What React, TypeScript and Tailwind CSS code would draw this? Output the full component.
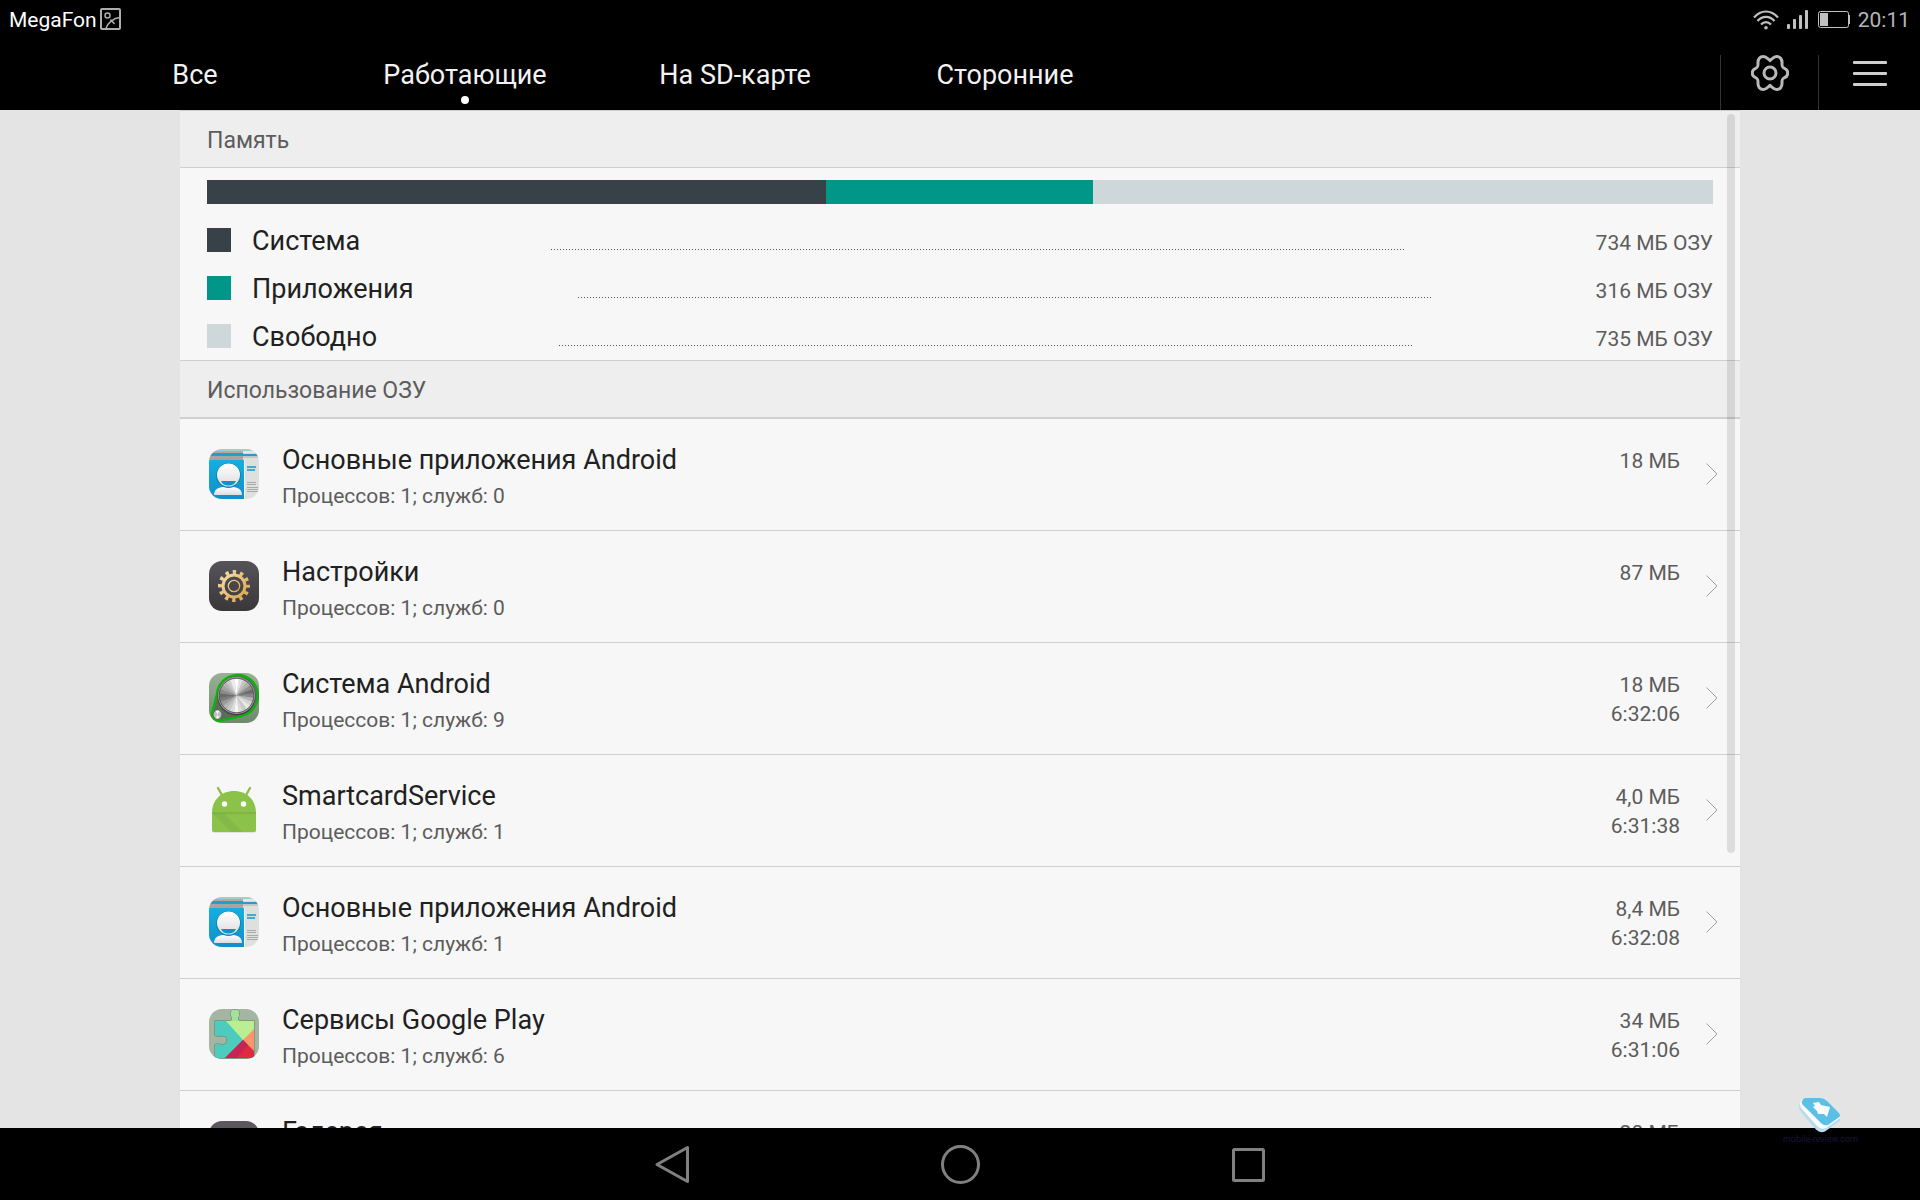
import type { ReactNode } from "react";

const tabs = ["Все", "Работающие", "На SD-карте", "Сторонние"];

const memory = [
  { label: "Система", mb: 734, color: "bg-[#374248]" },
  { label: "Приложения", mb: 316, color: "bg-[#009688]" },
  { label: "Свободно", mb: 735, color: "bg-[#ced7da]" },
];

function ContactsIcon() {
  return (
    <svg viewBox="0 0 50 50" className="size-[50px] rounded-[13px]" aria-hidden="true">
      <defs>
        <linearGradient id="contacts-blue" x1="0" y1="0" x2="0" y2="1">
          <stop offset="0" stopColor="#16aee0" />
          <stop offset="1" stopColor="#0f8fc6" />
        </linearGradient>
        <linearGradient id="contacts-face" x1="0" y1="0" x2="0" y2="1">
          <stop offset="0" stopColor="#ffffff" />
          <stop offset="1" stopColor="#dcdcdc" />
        </linearGradient>
      </defs>
      <rect width="50" height="50" fill="#dee0de" />
      <rect width="50" height="2" fill="#9fcfc8" />
      <rect y="2" width="34" height="2" fill="#b5aaa2" />
      <rect x="34" y="2" width="16" height="2" fill="#e4e6e4" />
      <rect y="4" width="50" height="3" fill="#1d9fd0" />
      <rect x="34" y="4" width="16" height="1" fill="#cfe0e6" />
      <rect y="7" width="34" height="4" fill="#a8a5a1" />
      <rect x="34" y="7" width="16" height="2" fill="#c4c6c6" />
      <rect y="11" width="35" height="39" fill="url(#contacts-blue)" />
      <rect x="35" y="11" width="1" height="39" fill="#f5f5f5" />
      <rect x="38" y="17" width="9" height="2" fill="#4aa8cc" />
      <rect x="38" y="20" width="8" height="2" fill="#4aa8cc" />
      <path d="M38 33.500h9M38 35.500h9M38 38.500h11M38 40.500h11M38 42.500h11" stroke="#a8aaaa" />
      <path d="M5 46c0-6 5-8 10-8h8c5 0 10 2 10 8z" fill="url(#contacts-face)" />
      <circle cx="19.500" cy="26.500" r="12.500" fill="#0d86b8" />
      <circle cx="19.500" cy="26" r="11.500" fill="url(#contacts-face)" />
      <path d="M12 32h15c-1 3-4 4.500-7.500 4.500S13 35 12 32z" fill="#1093c8" />
    </svg>
  );
}

function SettingsIcon() {
  return (
    <svg viewBox="0 0 50 50" className="size-[50px] rounded-[13px]" fill="none" aria-hidden="true">
      <defs>
        <linearGradient id="settings-bg" x1="0" y1="0" x2="0" y2="1">
          <stop offset="0" stopColor="#565458" />
          <stop offset="1" stopColor="#39373a" />
        </linearGradient>
        <linearGradient id="settings-gold" x1="0" y1="0" x2="1" y2="1">
          <stop offset="0" stopColor="#f3dba6" />
          <stop offset="1" stopColor="#dba74c" />
        </linearGradient>
      </defs>
      <rect width="50" height="50" fill="url(#settings-bg)" />
      <circle
        cx="25"
        cy="25"
        r="14"
        stroke="url(#settings-gold)"
        strokeWidth="4"
        strokeDasharray="3.330 4"
        strokeDashoffset="1.660"
      />
      <circle cx="25" cy="25" r="11" stroke="url(#settings-gold)" strokeWidth="3" />
      <circle cx="25" cy="25" r="5.700" stroke="url(#settings-gold)" strokeWidth="1.200" />
    </svg>
  );
}

// Brushed metal: one shade per slice, clockwise from the top.
const metal = [
  "#ffffff", "#e2e2e2", "#c4c4c4", "#b0b0b0", "#8e8e8e", "#6c6c6c", "#888888", "#b4b4b4",
  "#d4d4d4", "#e8e8e8", "#c8c8c8", "#d8d8d8", "#f6f6f6", "#dcdcdc", "#c6c6c6", "#b4b4b4",
  "#9a9a9a", "#7c7c7c", "#6a6a6a", "#8a8a8a", "#a2a2a2", "#b6b6b6", "#cccccc", "#ececec",
];

function slice(cx: number, cy: number, r: number, i: number) {
  const step = (Math.PI * 2) / metal.length;
  const a = (i - 0.5) * step;
  const b = (i + 0.6) * step;
  return `M${cx} ${cy}L${cx + r * Math.sin(a)} ${cy - r * Math.cos(a)}L${cx + r * Math.sin(b)} ${cy - r * Math.cos(b)}Z`;
}

function KnobIcon() {
  return (
    <svg viewBox="0 0 50 50" className="size-[50px] rounded-[13px]" fill="none" aria-hidden="true">
      <defs>
        <linearGradient id="knob-bg" x1="0" y1="0" x2="0" y2="1">
          <stop offset="0" stopColor="#9bb096" />
          <stop offset="1" stopColor="#6d8a6a" />
        </linearGradient>
      </defs>
      <rect width="50" height="50" fill="url(#knob-bg)" />
      <path
        d="M8 22A20.500 20.500 0 1 1 35 42C30 44.500 18 46 11 47.500A6.500 6.500 0 0 1 3 40C5 34 6 28 8 22z"
        fill="#5c6b5b"
        stroke="#10b010"
        strokeWidth="2.400"
      />
      <circle cx="27.500" cy="23.500" r="19" fill="#3f433f" />
      <circle cx="27.500" cy="22.500" r="18.500" fill="#a8a8a8" />
      {metal.map((shade, i) => (
        <path key={i} d={slice(27.5, 22.5, 17.3, i)} fill={shade} />
      ))}
      <circle cx="27.500" cy="22.500" r="17.300" stroke="#555555" strokeWidth="1" />
      <circle cx="8.500" cy="41.500" r="4.500" fill="#bdbdbd" stroke="#5a5a5a" />
      <path d="M8.500 41.500L6.500 37.500h4zM8.500 41.500L6.500 45.500h4z" fill="#f5f5f5" />
    </svg>
  );
}

function AndroidIcon() {
  return (
    <svg viewBox="0 2 50 50" className="size-[50px]" fill="none" aria-hidden="true">
      <path d="M3 45v2.500a2 2 0 0 0 2 2h40a2 2 0 0 0 2-2V45z" fill="#c9cfc2" />
      <path d="M9 5l4.500 8M41 5l-4.500 8" stroke="#8bc34a" strokeWidth="2.400" strokeLinecap="round" />
      <path d="M3 30C3 17 12 8 25 8s22 9 22 22z" fill="#8bc34a" />
      <path d="M3 30h44v17a2 2 0 0 1-2 2H5a2 2 0 0 1-2-2z" fill="#8bc34a" />
      <path d="M3 30l19 19h12L15 30z" fill="#84b948" />
      <path d="M3 30h44" stroke="#76a83e" />
      <circle cx="15.500" cy="21" r="2.700" fill="#ffffff" />
      <circle cx="34.500" cy="21" r="2.700" fill="#ffffff" />
    </svg>
  );
}

function PlayServicesIcon() {
  return (
    <svg viewBox="0 0 50 50" className="size-[50px] rounded-[13px]" aria-hidden="true">
      <defs>
        <clipPath id="puzzle">
          <path d="M6 12h16c2-1 1-3 .500-5C21 3 22 1 26 1s5 2 3.500 6c-.500 2-1.500 4 .500 5h15v37H6V36c2-2 3-1 6-.500 4 1 6-1 6-4.500s-2-5-6-4c-3 .500-4 1-6-1z" />
        </clipPath>
      </defs>
      <rect width="50" height="50" fill="#a4b5a1" />
      <path
        d="M6 12h16c2-1 1-3 .500-5C21 3 22 1 26 1s5 2 3.500 6c-.500 2-1.500 4 .500 5h15v37H6V36c2-2 3-1 6-.500 4 1 6-1 6-4.500s-2-5-6-4c-3 .500-4 1-6-1z"
        fill="none"
        stroke="#7d8c7a"
        strokeWidth="1.500"
      />
      <g clipPath="url(#puzzle)">
        <rect width="50" height="50" fill="#4dccbd" />
        <path d="M6 0h44v19L34 31 17 12z" fill="#b9ee93" />
        <path d="M21 0h11v12H21z" fill="#a0e29a" />
        <path d="M46 19v24L34 31z" fill="#f9976a" />
        <path d="M34 31L15 50h31V43z" fill="#e02a40" />
        <path d="M34 31L15 50h12l12-14z" fill="#c62554" />
      </g>
    </svg>
  );
}

function GalleryIcon() {
  return (
    <svg viewBox="0 0 50 50" className="size-[50px] rounded-[13px]" aria-hidden="true">
      <rect width="50" height="50" fill="#5a585c" />
      <rect x="10" y="14" width="30" height="22" rx="3" fill="#e6e6e6" />
    </svg>
  );
}

type App = { name: string; info: string; size: string; time?: string; icon: ReactNode };

const apps: App[] = [
  { name: "Основные приложения Android", info: "Процессов: 1; служб: 0", size: "18 МБ", icon: <ContactsIcon /> },
  { name: "Настройки", info: "Процессов: 1; служб: 0", size: "87 МБ", icon: <SettingsIcon /> },
  { name: "Система Android", info: "Процессов: 1; служб: 9", size: "18 МБ", time: "6:32:06", icon: <KnobIcon /> },
  { name: "SmartcardService", info: "Процессов: 1; служб: 1", size: "4,0 МБ", time: "6:31:38", icon: <AndroidIcon /> },
  { name: "Основные приложения Android", info: "Процессов: 1; служб: 1", size: "8,4 МБ", time: "6:32:08", icon: <ContactsIcon /> },
  { name: "Сервисы Google Play", info: "Процессов: 1; служб: 6", size: "34 МБ", time: "6:31:06", icon: <PlayServicesIcon /> },
  { name: "Галерея", info: "Процессов: 1; служб: 0", size: "20 МБ", icon: <GalleryIcon /> },
];

function StatusBar() {
  return (
    <div className="flex h-10 items-center justify-between pr-[10px] pl-[9px] text-[21px] leading-6">
      <div className="flex items-center gap-[3px] text-white">
        <span>MegaFon</span>
        <svg viewBox="0 0 21 23" className="mb-0.5 h-[23px] w-[21px]" fill="none" stroke="#adadad" strokeWidth="2" aria-hidden="true">
          <rect x="1" y="1" width="19" height="20" rx="1" />
          <circle cx="7.500" cy="7.500" r="2.500" strokeWidth="1.500" />
          <path d="M6 20C8 15 13 10 20 9.500M10.500 11.500l4 4.500" strokeWidth="1.500" />
        </svg>
      </div>
      <div className="flex items-center gap-2 text-[#b5b5b5]">
        <svg viewBox="0 0 26 20" className="h-5 w-[26px]" fill="none" stroke="#c0c0c0" strokeWidth="2.200" aria-hidden="true">
          <path d="M1 7.500C8-.500 18-.500 25 7.500M4.500 11c5-5.500 12-5.500 17 0M8 14.500c3-3.300 7-3.300 10 0" />
          <circle cx="13" cy="17.700" r="1.800" fill="#c0c0c0" stroke="none" />
        </svg>
        <svg viewBox="0 0 21 20" className="h-5 w-[21px]" fill="#c0c0c0" aria-hidden="true">
          <rect y="14" width="3" height="5" rx="1" />
          <rect x="6" y="9" width="3" height="10" rx="1" />
          <rect x="12" y="5" width="3" height="14" rx="1" />
          <rect x="18" width="3" height="19" rx="1" />
        </svg>
        <svg viewBox="0 0 32 18" className="ml-0.5 h-[18px] w-8" fill="none" aria-hidden="true">
          <rect x=".500" y=".500" width="30" height="16" rx="2" stroke="#c0c0c0" />
          <rect x="2" y="2" width="8" height="13" fill="#c0c0c0" />
          <rect x="31" y="4" width="1" height="9" fill="#c0c0c0" />
        </svg>
        <span>20:11</span>
      </div>
    </div>
  );
}

function Header() {
  return (
    <header className="shrink-0 bg-black">
      <StatusBar />
      <div className="flex h-[70px] items-end justify-between pl-[60px]">
        <nav className="flex h-full">
          {tabs.map((tab) => (
            <button
              key={tab}
              type="button"
              aria-current={tab === "Работающие" ? "page" : undefined}
              className="flex w-[270px] flex-col items-center pt-[17px] text-[27px] leading-9 text-[#f2f2f2]"
            >
              {tab}
              {tab === "Работающие" && <span className="mt-[3px] size-2 rounded-full bg-white" />}
            </button>
          ))}
        </nav>
        <div className="flex h-[55px]">
          <button type="button" aria-label="Настройки" className="flex w-[98px] justify-center border-l border-[#333]">
            <svg viewBox="0 0 38 36" className="h-9 w-[38px]" fill="none" stroke="#b9b9b9" strokeWidth="3">
              <path d="M19 5.500C21.500 3.500 23 1.500 25.500 1.500 29 1.500 31.300 4 31 8.500 30.900 12 31.500 12.500 33.500 13.300 37.800 15 37.800 21 33.500 22.700 31.500 23.500 30.900 24 31 27.500 31.300 32 29 34.500 25.500 34.500 23 34.500 21.500 32.500 19 30.500 16.500 32.500 15 34.500 12.500 34.500 9 34.500 6.700 32 7 27.500 7.100 24 6.500 23.500 4.500 22.700 .200 21 .200 15 4.500 13.300 6.500 12.500 7.100 12 7 8.500 6.700 4 9 1.500 12.500 1.500 15 1.500 16.500 3.500 19 5.500z" />
              <circle cx="19" cy="18" r="6" />
            </svg>
          </button>
          <button type="button" aria-label="Меню" className="flex w-[102px] justify-center border-l border-[#333] pt-[5px]">
            <svg viewBox="0 0 34 28" className="h-7 w-[34px]" fill="#cfcfcf">
              <rect y="1" width="34" height="3" rx="1" />
              <rect y="12" width="34" height="3" rx="1" />
              <rect y="23" width="34" height="3" rx="1" />
            </svg>
          </button>
        </div>
      </div>
    </header>
  );
}

function SectionTitle({ children }: { children: ReactNode }) {
  return (
    <h2 className="border-y border-[#cfcfcf] bg-[#eee] px-[27px] pt-1 text-[23px] leading-[52px] text-[#5c5c5c]">{children}</h2>
  );
}

function Memory() {
  return (
    <section>
      <SectionTitle>Память</SectionTitle>
      <div className="px-[27px] pt-3">
        <div className="flex h-6">
          {memory.map((m) => (
            <div key={m.label} className={m.color} style={{ flexGrow: m.mb }} />
          ))}
        </div>
        <ul className="pt-3">
          {memory.map((m) => (
            <li key={m.label} className="flex h-12 items-center">
              <span className={`mr-[21px] size-6 ${m.color}`} />
              <span className="pt-0.5 text-[27px] leading-9 text-[#212121]">{m.label}</span>
              <span className="flex flex-1 justify-center pt-[19px]">
                <span className="h-px w-[854px] bg-[repeating-linear-gradient(90deg,#555_0_1px,transparent_1px_3px)]" />
              </span>
              <span className="pt-1.5 text-[21px] leading-8 text-[#5c5c5c]">{m.mb} МБ ОЗУ</span>
            </li>
          ))}
        </ul>
      </div>
    </section>
  );
}

function AppRow({ app }: { app: App }) {
  return (
    <li>
      <button type="button" className="flex h-28 w-full items-start border-t border-[#cfcfcf] pr-[22px] pl-[29px] text-left">
        <span className="pt-[30px]">{app.icon}</span>
        <span className="flex flex-1 flex-col pt-[23px] pl-[23px]">
          <span className="text-[27px] leading-9 text-[#212121]">{app.name}</span>
          <span className="text-[21px] leading-9 text-[#5c5c5c]">{app.info}</span>
        </span>
        <span className="flex flex-col pt-7 text-right text-[21px] leading-[29px] text-[#5c5c5c]">
          <span>{app.size}</span>
          {app.time && <span>{app.time}</span>}
        </span>
        <svg viewBox="0 0 12 22" className="mt-11 ml-[26px] h-[22px] w-3" fill="none" stroke="#a0a0a0" aria-hidden="true">
          <path d="M.500 .500L11 11 .500 21.500" />
        </svg>
      </button>
    </li>
  );
}

function NavBar() {
  return (
    <nav className="flex h-[72px] shrink-0 items-center justify-center bg-black">
      <button type="button" aria-label="Назад" className="flex w-72 justify-center">
        <svg viewBox="0 0 40 40" className="size-10" fill="none" stroke="#808080" strokeWidth="3" strokeLinejoin="round">
          <path d="M5 20.500L35.500 3.500v34z" />
        </svg>
      </button>
      <button type="button" aria-label="Домой" className="flex w-72 justify-center">
        <svg viewBox="0 0 40 40" className="size-10" fill="none" stroke="#808080" strokeWidth="3">
          <circle cx="20.500" cy="20.500" r="18" />
        </svg>
      </button>
      <button type="button" aria-label="Недавние" className="flex w-72 justify-center">
        <svg viewBox="0 0 40 40" className="size-10" fill="none" stroke="#808080" strokeWidth="3">
          <rect x="5.500" y="5.500" width="30" height="31" rx="1" />
        </svg>
      </button>
    </nav>
  );
}

function Watermark() {
  return (
    <div className="absolute right-[62px] bottom-[55px] flex flex-col items-center">
      <svg viewBox="0 0 42 35" className="h-[35px] w-[42px]" aria-hidden="true">
        <path d="M0 9q0-4 3-6l38 16v4L26 33.500q-5 2-9-2L2 14q-2-3-2-5z" fill="#b9dbef" />
        <path d="M1 6q0-3 2-5l38 17v2L27 30q-5 2-9-2L3 11Q1 9 1 6z" fill="#fafcfd" />
        <path d="M3 3q1-3 4-3h14q4 0 7 3l11 11q4 4 0 6L29 27q-3 1-6-1L5 8Q2 6 3 3z" fill="#5bc0e6" />
        <path d="M14 5l6-1 2 3 9 2-3 10-3-3h-6l-1-3-4-4 2-1z" fill="#fafcfd" />
      </svg>
      <span className="text-[9px] leading-3 text-[#14173d]">mobile-review.com</span>
    </div>
  );
}

export default function RunningApps() {
  return (
    <div className="relative flex h-screen flex-col overflow-hidden bg-[#e4e4e4] font-['Roboto',sans-serif]">
      <Header />
      <main className="relative mx-[180px] min-h-0 flex-1 overflow-hidden bg-[#f7f7f7]">
        <Memory />
        <SectionTitle>Использование ОЗУ</SectionTitle>
        <ul>
          {apps.map((app, i) => (
            <AppRow key={i} app={app} />
          ))}
        </ul>
        <div className="absolute top-1 right-[5px] h-[739px] w-2 rounded-full bg-black/10" />
      </main>
      <NavBar />
      <Watermark />
    </div>
  );
}
